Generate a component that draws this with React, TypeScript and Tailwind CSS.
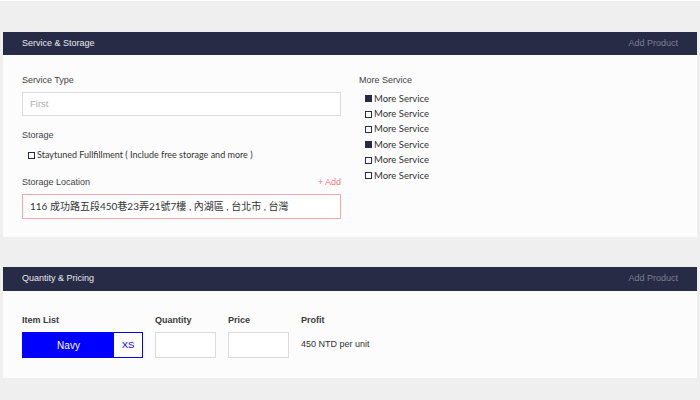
import React from "react";

// ── Helpers ───────────────────────────────────────────────────

const sans = "font-['Liberation_Sans','Helvetica',sans-serif]";
const geo = "font-['Lato','Noto_Sans_CJK_TC',sans-serif]";

function Box({ checked }: { checked?: boolean }) {
  return (
    <span
      className={
        "inline-block h-[7px] w-[7px] shrink-0 border-[1.5px] border-[#272b45] " +
        (checked ? "bg-[#272b45]" : "bg-white")
      }
    />
  );
}

function CardHeader({ title, h }: { title: string; h: string }) {
  return (
    <div className={`flex items-center justify-between bg-[#272b45] px-[19px] ${h} ${sans} text-[9px]`}>
      <span className="text-[#e8e8ee]">{title}</span>
      <span className="text-[#7d7f8f]">Add Product</span>
    </div>
  );
}

// ── App ───────────────────────────────────────────────────────

export default function App() {
  const more = [true, false, false, true, false, false];

  return (
    <div className="min-h-[400px] w-[700px] bg-[#efefef]">
      <div className="h-px bg-white" />

      {/* Service & Storage */}
      <div className="mx-[3px] mt-[31px] bg-[#fcfcfc]">
        <CardHeader title="Service & Storage" h="h-[23px]" />
        <div className="flex px-[19px] pt-[20px] pb-[18px]">
          <div className="w-[319px]">
            <div className={`${sans} text-[9px] leading-[11px] text-[#444]`}>Service Type</div>
            <div className={`mt-[6px] h-[24px] border border-[#dcdcdc] bg-white flex items-center px-[7px] pt-px ${sans} text-[9.5px] text-[#b0b0b0]`}>
              First
            </div>

            <div className={`mt-[14px] ${sans} text-[9px] leading-[11px] text-[#444]`}>Storage</div>
            <div className={`mt-[8px] ml-[6px] flex items-center gap-[2px] ${geo} text-[9px] leading-[12px] text-[#333]`}>
              <Box />
              <span>Staytuned Fullfillment ( Include free storage and more )</span>
            </div>

            <div className={`mt-[16px] flex justify-between ${sans} text-[9px] leading-[11px]`}>
              <span className="text-[#444]">Storage Location</span>
              <span className="text-[#f07a86]">+ Add</span>
            </div>
            <div className={`mt-[6px] h-[25px] border border-[#f4a9b0] bg-white flex items-center px-[7px] ${geo} text-[10px] text-[#333]`}>
              116 成功路五段450巷23弄21號7樓 , 內湖區 , 台北市 , 台灣
            </div>
          </div>

          <div className="ml-[18px]">
            <div className={`${sans} text-[9px] leading-[11px] text-[#444]`}>More Service</div>
            <div className="mt-[5px] ml-[6px] flex flex-col">
              {more.map((c, i) => (
                <div key={i} className={`flex items-center gap-[2px] h-[15.4px] ${geo} text-[9.5px] text-[#333]`}>
                  <Box checked={c} />
                  <span>More Service</span>
                </div>
              ))}
            </div>
          </div>
        </div>
      </div>

      {/* Quantity & Pricing */}
      <div className="mx-[3px] mt-[30px] bg-[#fcfcfc]">
        <CardHeader title="Quantity & Pricing" h="h-[24px]" />
        <div className={`flex gap-[12px] px-[19px] pt-[24px] pb-[20px] ${sans}`}>
          <div className="w-[121px]">
            <div className="text-[9px] leading-[11px] font-bold text-[#3a3a3a]">Item List</div>
            <div className="mt-[6px] flex h-[26px] border border-[#0000ff]">
              <div className="flex-1 bg-[#0000ff] flex items-center justify-center text-[10px] text-white">Navy</div>
              <div className="w-[28px] bg-white flex items-center justify-center text-[9.5px] text-[#0000ff]">XS</div>
            </div>
          </div>
          <div className="w-[61px]">
            <div className="text-[9px] leading-[11px] font-bold text-[#3a3a3a]">Quantity</div>
            <div className="mt-[6px] h-[26px] border border-[#dcdcdc] bg-white" />
          </div>
          <div className="w-[61px]">
            <div className="text-[9px] leading-[11px] font-bold text-[#3a3a3a]">Price</div>
            <div className="mt-[6px] h-[26px] border border-[#dcdcdc] bg-white" />
          </div>
          <div>
            <div className="text-[9px] leading-[11px] font-bold text-[#3a3a3a]">Profit</div>
            <div className="mt-[6px] h-[26px] flex items-center text-[9px] text-[#333]">450 NTD per unit</div>
          </div>
        </div>
      </div>
    </div>
  );
}
